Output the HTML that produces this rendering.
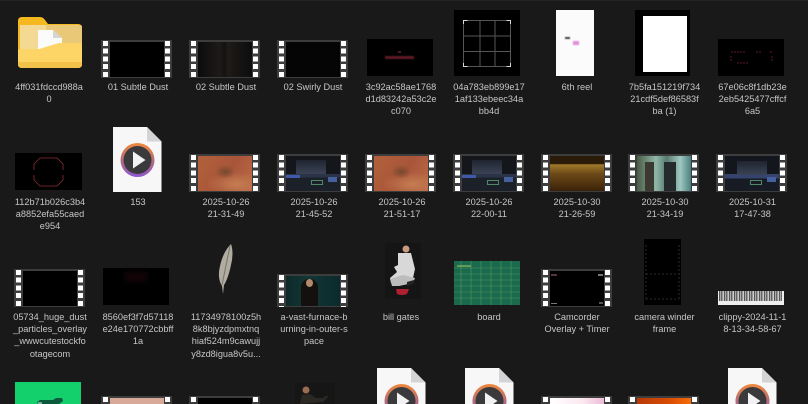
<!DOCTYPE html>
<html><head><meta charset="utf-8"><style>
html,body{margin:0;padding:0;background:#191919;overflow:hidden}
#p{position:relative;width:808px;height:404px;overflow:hidden;background:#191919;font-family:"Liberation Sans",sans-serif}
#p>*{position:absolute}
.t{width:88px;text-align:center;color:#c6c6c6;font-size:9.2px;line-height:12.2px;white-space:nowrap;filter:blur(.25px)}
.f{width:71px;height:38px;background:#3d3d3d;filter:blur(.3px);overflow:hidden}
.f::before,.f::after{content:"";position:absolute;top:1px;width:5px;height:37px;background:repeating-linear-gradient(#fff 0 5px,transparent 5px 7.7px)}
.f::before{left:2px}.f::after{right:2px}
.s{height:8px}
.s::before,.s::after{height:7px}
.i{position:absolute;left:9px;top:1.5px;width:54px;height:35px;background:#000;overflow:hidden}
.s .i{height:6.5px}
.i>*{position:absolute}
.b{background:#000}
.dirt{background:radial-gradient(ellipse 10px 7px at 50% 45%,#77492f,transparent),radial-gradient(ellipse 30px 12px at 70% 80%,#c47c52,transparent),linear-gradient(120deg,#b2603a,#a8553a 55%,#bb6c44)}
.ed{background:linear-gradient(#14161b 0 52%,#2b3348 52% 62%,#1c2028 62% 100%)}
.ed i{position:absolute;left:10px;top:4px;width:30px;height:14px;background:linear-gradient(#20252f,#3a4356)}
.ed u{position:absolute;left:0;top:19px;width:14px;height:3px;background:#3f5aa8}
.ed b{position:absolute;right:3px;top:21px;width:9px;height:5px;background:#46609f}
.ed s{position:absolute;left:25px;top:24px;width:12px;height:5px;border:1px solid #4f8a68;box-sizing:border-box}
</style></head><body><div id="p">
<div style="left:0;top:0;width:808px;height:1px;background:#242424"></div>

<svg style="left:17px;top:16px" width="66" height="53" viewBox="0 0 66 53"><path d="M1 5q0-4 4-4h18q3 0 5 3l3 4h30q4 0 4 4v24H1z" fill="#f5b81f"/><path d="M3 9h60q2 0 2 2v24H3z" fill="#e9c878"/><path d="M3 9h26v26H3z" fill="#f4d995"/><path d="M21 14h15l9 8v14H21z" fill="#fbfbfb"/><path d="M36 14l9 8h-9z" fill="#d5d5d5"/><path d="M1 35q0-2 2-2h19l20-6h21q2 0 2 2v19q0 4-4 4H5q-4 0-4-4z" fill="#fcd566"/><path d="M1 46h64v2q0 4-4 4H5q-4 0-4-4z" fill="#f3c24b"/></svg>
<div class="t" style="left:5px;top:81px">4ff031fdccd988a<br>0</div>

<div class="f" style="left:101px;top:40px"><div class="i"></div></div>
<div class="t" style="left:94px;top:81px">01 Subtle Dust</div>
<div class="f" style="left:189px;top:40px"><div class="i" style="background:linear-gradient(90deg,#0c0c0c,#1d1a18 40%,#141210 50%,#1e1b19 55%,#0d0d0d)"></div></div>
<div class="t" style="left:182px;top:81px">02 Subtle Dust</div>
<div class="f" style="left:277px;top:40px"><div class="i" style="background:#050505"></div></div>
<div class="t" style="left:269px;top:81px">02 Swirly Dust</div>

<div class="b" style="left:367px;top:39px;width:66px;height:37px"></div>
<div style="left:385px;top:56px;width:29px;height:3px;background:#5e1a24;filter:blur(.6px)"></div>
<div style="left:398px;top:51px;width:3px;height:2px;background:#4c161c"></div>
<div class="t" style="left:357px;top:81px">3c92ac58ae1768<br>d1d83242a53c2e<br>c070</div>

<svg style="left:454px;top:10px" width="66" height="66" viewBox="0 0 66 66"><rect width="66" height="66" fill="#000"/><g stroke="#565656" stroke-width="1" fill="none"><path d="M9.5 10.500h47v46h-47zM26 10v47M41 10v47M9 26h48M9 41.500h48"/></g><path d="M9.500 14v-3.500h4M52.500 10.500h4v3.500M9.500 53v3.500h4M52.500 56.500h4V53" stroke="#d8d8d8" fill="none"/></svg>
<div class="t" style="left:445px;top:81px">04a783eb899e17<br>1af133ebeec34a<br>bb4d</div>

<div style="left:556px;top:10px;width:37.500px;height:66px;background:#fbfbfb"></div>
<div style="left:565px;top:37px;width:5px;height:2px;background:#444;filter:blur(.5px)"></div>
<div style="left:573px;top:41px;width:6px;height:4px;background:#e08ad8;filter:blur(.7px)"></div>
<div class="t" style="left:533px;top:81px">6th reel</div>

<div class="b" style="left:635px;top:10px;width:55px;height:66px"></div>
<div style="left:642.500px;top:16px;width:44px;height:55.500px;background:#fff"></div>
<div class="t" style="left:620.500px;top:81px">7b5fa151219f734<br>21cdf5def86583f<br>ba (1)</div>

<div class="b" style="left:718px;top:39px;width:66px;height:37px"></div>
<svg style="left:718px;top:39px" width="66" height="37"><path d="M13 13h15M38 13h5M52 13h2M13 17v6M54 17v6M19 24h12" stroke="#3c1019" stroke-width="1.500" fill="none" stroke-dasharray="2 1"/></svg>
<div class="t" style="left:708.500px;top:81px">67e06c8f1db23e<br>2eb5425477cffcf<br>6a5</div>

<div class="b" style="left:15px;top:153px;width:67px;height:37px"></div>
<svg style="left:15px;top:153px" width="67" height="37"><path d="M25 5h17l6 6v6M48 22v5l-6 6H25l-6-6v-5M19 17v-6l6-6" fill="none" stroke="#8a2c36" stroke-width=".8"/></svg>
<div class="t" style="left:6px;top:196px">112b71b026c3b4<br>a8852efa55caed<br>e954</div>

<svg style="left:113px;top:127px" width="49" height="65" viewBox="0 0 49 65"><path d="M0 0h34l14.500 14.500V65H0z" fill="#f7f7f8"/><path d="M34 0l14.500 14.500H34z" fill="#d4d4d6"/><defs><linearGradient id="r" gradientUnits="userSpaceOnUse" x1="0" y1="16" x2="0" y2="50"><stop offset="0" stop-color="#f0883a"/><stop offset=".55" stop-color="#b06a80"/><stop offset="1" stop-color="#8c58d0"/></linearGradient></defs><circle cx="24.500" cy="33" r="17" fill="url(#r)"/><circle cx="24.500" cy="33" r="14" fill="#3a3a3c"/><path d="M20 24.500v17l12.500-8.500z" fill="#f2f2f2"/></svg>
<div class="t" style="left:94px;top:196px">153</div>

<div class="f" style="left:189px;top:154px"><div class="i dirt"></div></div>
<div class="t" style="left:182px;top:196px">2025-10-26<br>21-31-49</div>
<div class="f" style="left:277px;top:154px"><div class="i ed"><i></i><u></u><b></b><s></s></div></div>
<div class="t" style="left:270px;top:196px">2025-10-26<br>21-45-52</div>
<div class="f" style="left:365px;top:154px"><div class="i dirt"></div></div>
<div class="t" style="left:358px;top:196px">2025-10-26<br>21-51-17</div>
<div class="f" style="left:453px;top:154px"><div class="i ed"><i></i><u></u><b></b><s></s></div></div>
<div class="t" style="left:445px;top:196px">2025-10-26<br>22-00-11</div>
<div class="f" style="left:540.500px;top:154px"><div class="i" style="background:linear-gradient(#2a1c08 0 22%,#a07a2a 25%,#6e4a18 50%,#3a2208 100%)"></div></div>
<div class="t" style="left:533px;top:196px">2025-10-30<br>21-26-59</div>
<div class="f" style="left:628px;top:154px"><div class="i" style="background:linear-gradient(90deg,#4a5c48,#8fb8a8 35%,#5a7a70 55%,#9fc8c0 80%,#4a8080)"><i style="left:8px;top:6px;width:9px;height:29px;background:#3c3a30"></i><i style="left:27px;top:6px;width:12px;height:29px;background:#252a2c"></i></div></div>
<div class="t" style="left:621px;top:196px">2025-10-30<br>21-34-19</div>
<div class="f" style="left:716px;top:154px"><div class="i ed" style="background:linear-gradient(#13161d 0 52%,#35436e 52% 64%,#171b23 64%)"><i style="left:12px;top:5px"></i><b></b><s></s></div></div>
<div class="t" style="left:708.500px;top:196px">2025-10-31<br>17-47-38</div>

<div class="f" style="left:13.500px;top:269px"><div class="i"></div></div>
<div class="t" style="left:6px;top:311px">05734_huge_dust<br>_particles_overlay<br>_wwwcutestockfo<br>otagecom</div>

<div class="b" style="left:103px;top:268px;width:66px;height:37px"></div>
<div style="left:125px;top:272px;width:22px;height:10px;background:#120306;filter:blur(2px)"></div>
<div class="t" style="left:94px;top:311px">8560ef3f7d57118<br>e24e170772cbbff<br>1a</div>

<svg style="left:212px;top:243px" width="26" height="52" viewBox="0 0 26 52"><path d="M19 1q3 9 0 21q-3 14-7 20l-1 9-1-8q-5-8-2-20Q11 9 19 1z" fill="#b0aca0"/><path d="M18 3L10 42" stroke="#7a766c" fill="none"/></svg>
<div class="t" style="left:182px;top:311px">11734978100z5h<br>8k8bjyzdpmxtnq<br>hiaf524m9cawujj<br>y8zd8igua8v5u...</div>

<div class="f" style="left:277px;top:274px;height:33px"><div class="i" style="height:30px;background:linear-gradient(90deg,#0e2a2a,#123636 40%,#0c2a2c)"><i style="left:15px;top:3px;width:17px;height:27px;background:#14100e;border-radius:8px 8px 0 0"></i><i style="left:20px;top:3px;width:7px;height:8px;background:#b08a6a;border-radius:50%"></i></div></div>
<div class="t" style="left:270px;top:311px">a-vast-furnace-b<br>urning-in-outer-s<br>pace</div>

<svg style="left:385px;top:243px" width="36" height="56" viewBox="0 0 36 56"><rect width="36" height="56" fill="#151515"/><circle cx="21" cy="6" r="3.500" fill="#c89a80"/><path d="M13 10h13l4 16-2 9H13l-7 5-1-5 7-6-3-5 4-2z" fill="#d8d8d8"/><path d="M5 36l13-4 12 3-2 5-14 3H7z" fill="#bcbcbc"/><path d="M11 46h13l-2 5q-5 2-10 0z" fill="#b02030"/><path d="M22 39l7-2v4l-7 2z" fill="#222"/></svg>
<div class="t" style="left:357px;top:311px">bill gates</div>

<svg style="left:454px;top:261px" width="66" height="44" viewBox="0 0 66 44"><rect width="66" height="44" fill="#1a6a4e"/><path d="M0 7h66M0 13h66M0 19h66M0 25h66M0 31h66M0 37h66M7 0v44M17 0v44M27 0v44M37 0v44M47 0v44M57 0v44" stroke="#6fa868" stroke-width=".6" opacity=".7"/><path d="M3 5h14" stroke="#a8c860"/></svg>
<div class="t" style="left:445px;top:311px">board</div>

<div class="f" style="left:540.500px;top:269px"><div class="i"><i style="left:1px;top:3px;width:6px;height:2px;background:#55343a"></i><i style="right:1px;top:3px;width:5px;height:2px;background:#777"></i><i style="left:1px;bottom:2px;width:6px;height:1px;background:#777"></i><i style="right:1px;bottom:2px;width:4px;height:2px;background:#555"></i></div></div>
<div class="t" style="left:533px;top:311px">Camcorder<br>Overlay + Timer</div>

<div class="b" style="left:644px;top:239px;width:37px;height:66px"></div>
<svg style="left:644px;top:239px" width="37" height="66"><path d="M2 6v54M35 6v54M2 35h33M2 60h33" stroke="#2c2c2c" stroke-dasharray="2 2" fill="none"/></svg>
<div class="t" style="left:620.500px;top:311px">camera winder<br>frame</div>

<div style="left:717.500px;top:291px;width:66.500px;height:14px;background:#eeeeee"></div>
<div style="left:719px;top:291px;width:63px;height:10px;background:repeating-linear-gradient(90deg,#555 0 1px,#aaa 1px 2px,#666 2px 3.500px,#ccc 3.500px 5px)"></div>
<div class="t" style="left:708.500px;top:311px">clippy-2024-11-1<br>8-13-34-58-67</div>

<div style="left:15px;top:382px;width:66px;height:22px;background:#14d06c"></div>
<svg style="left:37px;top:397px" width="26" height="7"><path d="M0 5l3-2 13 0 3-2 6 0 1 3-4 3H1z" fill="#0c5a3c"/><path d="M1 6h4" stroke="#dff" stroke-width="1"/></svg>

<div class="f s" style="left:101px;top:396px"><div class="i" style="background:#d8a898"></div></div>
<div class="f s" style="left:189px;top:396px"><div class="i" style="background:#020202"></div></div>

<svg style="left:295px;top:383px" width="42" height="21" viewBox="0 0 42 21"><rect width="40" height="21" fill="#161616"/><circle cx="11" cy="7" r="3.500" fill="#9a6c50"/><path d="M5 21l2-9 8-1 6 4 7 0 4-3 1 2-5 5z" fill="#2c2824"/></svg>

<svg style="left:377px;top:368px" width="49" height="36" viewBox="0 0 49 36"><path d="M0 0h34l14.500 14.500V36H0z" fill="#f7f7f8"/><path d="M34 0l14.500 14.500H34z" fill="#d4d4d6"/><path d="M7.770 36A17 17 0 1 1 41.230 36Z" fill="url(#r)"/><path d="M10.830 36A14 14 0 1 1 38.170 36Z" fill="#3a3a3c"/><path d="M20 24.500V36H28.090L32.500 33z" fill="#f2f2f2"/></svg>
<svg style="left:464.500px;top:368px" width="49" height="36" viewBox="0 0 49 36"><path d="M0 0h34l14.500 14.500V36H0z" fill="#f7f7f8"/><path d="M34 0l14.500 14.500H34z" fill="#d4d4d6"/><path d="M7.770 36A17 17 0 1 1 41.230 36Z" fill="url(#r)"/><path d="M10.830 36A14 14 0 1 1 38.170 36Z" fill="#3a3a3c"/><path d="M20 24.500V36H28.090L32.500 33z" fill="#f2f2f2"/></svg>
<div class="f s" style="left:540.500px;top:396px"><div class="i" style="background:linear-gradient(90deg,#fff,#fbe8f0 60%,#eebcd8)"></div></div>
<div class="f s" style="left:628px;top:396px"><div class="i" style="background:linear-gradient(90deg,#b83a08,#d84c04 60%,#f86c08)"></div></div>
<svg style="left:728px;top:368px" width="49" height="36" viewBox="0 0 49 36"><path d="M0 0h34l14.500 14.500V36H0z" fill="#f7f7f8"/><path d="M34 0l14.500 14.500H34z" fill="#d4d4d6"/><path d="M7.770 36A17 17 0 1 1 41.230 36Z" fill="url(#r)"/><path d="M10.830 36A14 14 0 1 1 38.170 36Z" fill="#3a3a3c"/><path d="M20 24.500V36H28.090L32.500 33z" fill="#f2f2f2"/></svg>
</div></body></html>
